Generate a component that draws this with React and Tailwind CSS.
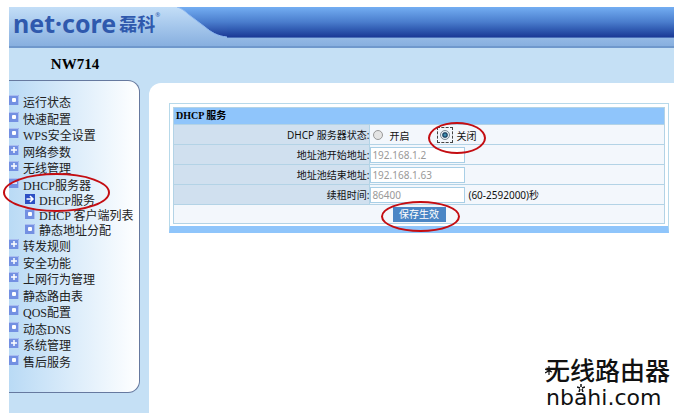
const menu = [
  { label: '运行状态', icon: 'dot' },
  { label: '快速配置', icon: 'dot' },
  { label: 'WPS安全设置', icon: 'dot' },
  { label: '网络参数', icon: 'plus' },
  { label: '无线管理', icon: 'plus' },
  {
    label: 'DHCP服务器',
    icon: 'minus',
    circled: true,
    children: [
      { label: 'DHCP服务', icon: 'arrow' },
      { label: 'DHCP 客户端列表', icon: 'dot' },
      { label: '静态地址分配', icon: 'dot' },
    ],
  },
  { label: '转发规则', icon: 'plus' },
  { label: '安全功能', icon: 'plus' },
  { label: '上网行为管理', icon: 'plus' },
  { label: '静态路由表', icon: 'dot' },
  { label: 'QOS配置', icon: 'dot' },
  { label: '动态DNS', icon: 'dot' },
  { label: '系统管理', icon: 'plus' },
  { label: '售后服务', icon: 'dot' },
];

const MenuIcon = ({ type }) => (
  <svg viewBox="0 0 10 10" className="h-[10px] w-[10px] shrink-0" aria-hidden="true">
    <rect width="10" height="10" fill={type === 'arrow' ? '#2c4fc4' : '#7390e2'} />
    {type !== 'arrow' && <path d="M0 .5h9.5V10" fill="none" stroke="#a9bdf0" />}
    {type === 'dot' && <rect x="3" y="3" width="4" height="4" rx="1" fill="#fff" />}
    {type === 'plus' && <path d="M5 2v6M2 5h6" stroke="#fff" strokeWidth="1.5" />}
    {type === 'minus' && <path d="M2 5h6" stroke="#fff" strokeWidth="1.5" />}
    {type === 'arrow' && (
      <path d="M1.5 5h6M5 2l3 3-3 3" fill="none" stroke="#fff" strokeWidth="1.5" />
    )}
  </svg>
);

const Circle = ({ className }) => (
  <span
    className={`pointer-events-none absolute z-10 rounded-[50%] border-2 border-[#c40d12] ${className}`}
  ></span>
);

const MenuItem = ({ item }) => (
  <li className="relative odd:mb-px">
    <a href="#" className="flex h-4 items-start gap-1 whitespace-nowrap">
      <MenuIcon type={item.icon} />
      <span className="leading-4">{item.label}</span>
    </a>
    {item.children && (
      <ul className="pl-4">
        {item.children.map((child) => (
          <li key={child.label}>
            <a href="#" className="flex h-[15px] items-start gap-1 whitespace-nowrap">
              <MenuIcon type={child.icon} />
              <span className="leading-[15px]">{child.label}</span>
            </a>
          </li>
        ))}
      </ul>
    )}
    {item.circled && <Circle className="-left-[6px] -top-[5px] h-[39px] w-[107px]" />}
  </li>
);

const Header = () => (
  <header className="flex h-[41px] items-start border-b-2 border-[#6f98cc] bg-gradient-to-b from-[#c3def7] to-[#87afdf]">
    <div className="flex w-[168px] shrink-0 items-start whitespace-nowrap pl-1 text-[#2f59ad]">
      <span className="font-['Noto_Sans','Open_Sans',sans-serif] text-[25px] font-bold leading-8">
        net·core
      </span>
      <span className="pl-[3px] pt-[4px] font-['Noto_Sans_CJK_SC',sans-serif] text-[18px] font-bold leading-6">
        磊科
      </span>
      <span className="pt-1 text-[6px] leading-[8px]">®</span>
    </div>
    <svg viewBox="0 0 50 31" className="h-[31px] w-[50px] shrink-0" aria-hidden="true">
      <defs>
        <linearGradient id="bar" x1="0" y1="0" x2="0" y2="1">
          <stop offset="0" stopColor="#74aef2" />
          <stop offset="0.5" stopColor="#4a7dcd" />
          <stop offset="1" stopColor="#1b3996" />
        </linearGradient>
      </defs>
      <path d="M0 0H50V30C40 29 34 25 28 20L11 7C8 4 4 1 0 0Z" fill="url(#bar)" />
      <path d="M0 0C4 1 8 4 11 7L28 20C34 25 40 29 50 30" fill="none" stroke="#8fb9f2" />
    </svg>
    <div className="h-[31px] flex-1 border-b border-[#4a6fb8] bg-gradient-to-b from-[#74aef2] via-[#4a7dcd] to-[#1b3996]"></div>
  </header>
);

const Sidebar = () => (
  <aside className="w-[140px] shrink-0">
    <h1 className="pt-[6px] pr-2 pb-[6px] text-center font-['Liberation_Serif',serif] text-[15px] font-bold leading-5 text-black">
      NW714
    </h1>
    <nav className="mr-[9px] rounded-r-xl border border-l-0 border-[#66799f] bg-gradient-to-r from-[#b9daf5] to-white pt-[14px] pb-[21px] font-['Liberation_Serif','Noto_Sans_CJK_SC',serif] text-[12px] text-[#222]">
      <ul>
        {menu.map((item) => (
          <MenuItem key={item.label} item={item} />
        ))}
      </ul>
    </nav>
  </aside>
);

const Row = ({ label, htmlFor, children }) => (
  <tr className="h-[20px] border border-[#b3d3e6]">
    <th
      scope="row"
      className="w-2/5 border-r border-[#b3d3e6] bg-[#d0e0ef] p-0 text-right font-normal"
    >
      {htmlFor ? <label htmlFor={htmlFor}>{label}:</label> : <span>{label}:</span>}
    </th>
    <td className="bg-[#f3f7fc] p-0">
      <div className="flex items-center">{children}</div>
    </td>
  </tr>
);

const TextField = ({ id, value }) => (
  <input
    id={id}
    type="text"
    defaultValue={value}
    className="h-4 w-[95px] border border-[#a9cfe6] bg-white px-px text-[10px] leading-[14px] text-[#999]"
  />
);

const radio =
  "h-[10px] w-[10px] appearance-none rounded-full border border-[#999] bg-[#e4e4e4] checked:border-[#7c8a94] checked:bg-[radial-gradient(circle,#4fb4d4_0,#163a5c_40%,#e8f0f4_60%)]";

const ServiceForm = () => (
  <form className="border border-[#b7d9ea] border-b-[7px] border-b-[#8fc5fb] bg-white p-[3px] pb-[2px] font-['Noto_Sans','Noto_Sans_CJK_SC',sans-serif] text-[10px] leading-[14px] text-[#111]">
    <table className="w-full border-collapse">
      <thead>
        <tr className="h-[17px] border border-[#b3d3e6] bg-[#8fc5fb]">
          <th
            colSpan={2}
            className="p-0 pl-[2px] text-left font-['Liberation_Serif','Noto_Sans_CJK_SC',serif] text-[10px] font-bold text-black"
          >
            DHCP 服务
          </th>
        </tr>
      </thead>
      <tbody>
        <Row label="DHCP 服务器状态">
          <label className="flex items-center gap-[6px] pl-[3px]">
            <input type="radio" name="status" className={radio} />
            <span className="pt-[3px]">开启</span>
          </label>
          <label className="relative ml-[28px] flex items-center gap-[3px]">
            <span className="flex border border-dashed border-[#444] p-[2px]">
              <input type="radio" name="status" defaultChecked className={radio} />
            </span>
            <span className="pt-[3px]">关闭</span>
            <Circle className="-left-[9px] -top-[4px] h-[32px] w-[58px]" />
          </label>
        </Row>
        <Row label="地址池开始地址" htmlFor="start">
          <TextField id="start" value="192.168.1.2" />
        </Row>
        <Row label="地址池结束地址" htmlFor="end">
          <TextField id="end" value="192.168.1.63" />
        </Row>
        <Row label="续租时间" htmlFor="lease">
          <TextField id="lease" value="86400" />
          <span className="pl-[3px]">(60-2592000)秒</span>
        </Row>
        <tr className="h-[19px] border border-[#b3d3e6] bg-[#f3f7fc]">
          <td colSpan={2} className="p-0">
            <div className="relative mx-auto w-[53px]">
              <button type="button" className="block h-[15px] w-full bg-[#4a85c5] text-[10px] text-white">
                保存生效
              </button>
              <Circle className="-left-[12px] -top-[6px] h-[31px] w-[79px]" />
            </div>
          </td>
        </tr>
      </tbody>
    </table>
  </form>
);

const Watermark = () => (
  <div className="absolute bottom-0 right-1 whitespace-nowrap pb-px text-[#111]">
    <div className="relative font-['Noto_Sans_CJK_SC',sans-serif] text-[25px] font-medium leading-[30px]">
      无线路由器
      <svg viewBox="0 0 8 10" className="absolute left-0 top-3 h-[10px] w-2" aria-hidden="true">
        <path d="M4 0v9M0 3l7 3M0 7l7-4" stroke="#111" strokeWidth="1.200" />
      </svg>
    </div>
    <div className="relative pl-px font-['DejaVu_Sans',sans-serif] text-[22px] leading-[28px]">
      nbahi.com
      <svg viewBox="0 0 8 8" className="absolute left-[32px] top-0 h-2 w-2" aria-hidden="true">
        <path d="M4 0v3M0 3l3 1M8 3L5 4M2 8l1-3M6 8L5 5" stroke="#111" strokeWidth="1.500" />
      </svg>
    </div>
  </div>
);

export default function App() {
  return (
    <div className="relative flex min-h-screen flex-col overflow-hidden bg-white pl-[9px] pt-[7px]">
      <Header />
      <div className="flex flex-1 bg-[#c5e0f5]">
        <Sidebar />
        <main className="mt-[35px] min-w-0 flex-1 rounded-tl-xl bg-white pl-5 pr-[5px] pt-5">
          <ServiceForm />
        </main>
      </div>
      <Watermark />
    </div>
  );
}
